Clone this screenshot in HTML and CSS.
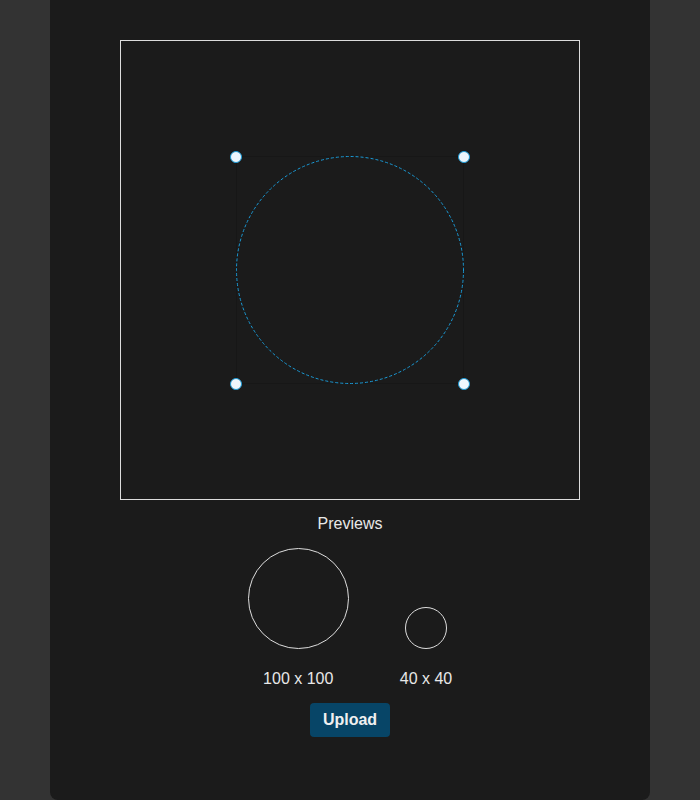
FILE: index.html
```html
<!DOCTYPE html>
<html>
<head>
<meta charset="utf-8">
<link rel="stylesheet" href="styles.css">
</head>
<body>
<div class="card">
  <div class="stage">
    <div class="crop">
      <svg class="ring" width="228" height="228" viewBox="0 0 228 228">
        <circle cx="114" cy="114" r="113.5" fill="none" stroke="#1a9ad6" stroke-width="1" stroke-dasharray="3 2"/>
      </svg>
      <span class="handle tl"></span>
      <span class="handle tr"></span>
      <span class="handle bl"></span>
      <span class="handle br"></span>
    </div>
  </div>
  <div class="previews-title">Previews</div>
  <div class="previews">
    <div class="preview">
      <div class="circle big"></div>
      <div class="label">100 x 100</div>
    </div>
    <div class="preview">
      <div class="circle small"></div>
      <div class="label">40 x 40</div>
    </div>
  </div>
  <button class="upload">Upload</button>
</div>
</body>
</html>
```
FILE: styles.css
```css
html, body {
  margin: 0;
  padding: 0;
  background: #333333;
  height: 800px;
  overflow: hidden;
}
body {
  font-family: "Liberation Sans", Arial, sans-serif;
  color: #e8e8e8;
}
.card {
  width: 600px;
  height: 800px;
  box-sizing: border-box;
  margin: 0 auto;
  background: #1b1b1b;
  border-radius: 0 0 8px 8px;
  padding-top: 40px;
  display: flex;
  flex-direction: column;
  align-items: center;
}
.stage {
  width: 460px;
  height: 460px;
  box-sizing: border-box;
  border: 1px solid #dddddd;
  display: flex;
  align-items: center;
  justify-content: center;
}
.crop {
  position: relative;
  width: 228px;
  height: 228px;
  box-sizing: border-box;
  border: 1px solid #171717;
}
.ring {
  position: absolute;
  left: -1px;
  top: -1px;
}
.handle {
  position: absolute;
  width: 10px;
  height: 10px;
  border-radius: 50%;
  background: #eef6fc;
  border: 1px solid #1a9ad6;
}
.tl { left: -7px; top: -6px; }
.tr { right: -7px; top: -6px; }
.bl { left: -7px; bottom: -7px; }
.br { right: -7px; bottom: -7px; }
.previews-title {
  margin-top: 15px;
  font-size: 16px;
  line-height: 18px;
}
.previews {
  margin-top: 15px;
  display: flex;
  align-items: flex-end;
  gap: 51px;
}
.preview {
  display: flex;
  flex-direction: column;
  align-items: center;
}
.circle {
  border: 1px solid #dddddd;
  border-radius: 50%;
  box-sizing: border-box;
}
.big { width: 101px; height: 101px; }
.small { width: 42px; height: 42px; }
.label {
  margin-top: 21px;
  font-size: 16px;
  line-height: 18px;
}
.upload {
  margin-top: 15px;
  width: 80px;
  height: 34px;
  border: none;
  border-radius: 4px;
  background: #074567;
  color: #f0f0f0;
  font-family: "Liberation Sans", Arial, sans-serif;
  font-weight: bold;
  font-size: 16px;
  padding: 0;
}
```
